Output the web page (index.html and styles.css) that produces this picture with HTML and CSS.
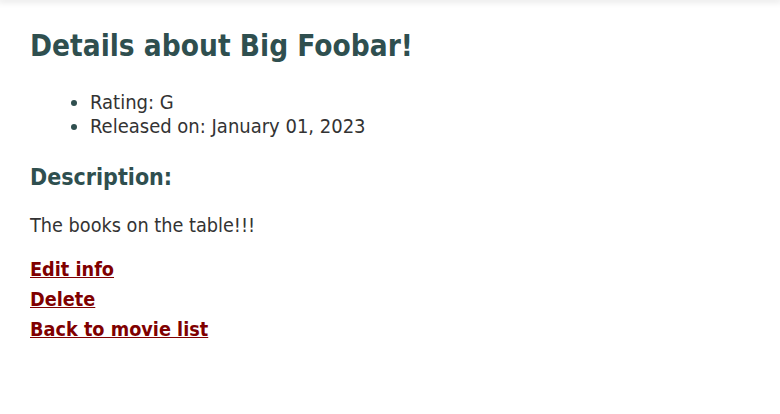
FILE: index.html
```html
<!DOCTYPE html>
<html>
<head>
<meta charset="utf-8">
<link rel="stylesheet" href="styles.css">
</head>
<body>
<div class="topbar"></div>
<main class="content">
  <h1 class="title">Details about Big Foobar!</h1>
  <ul class="facts">
    <li>Rating: G</li>
    <li>Released on: January 01, 2023</li>
  </ul>
  <h3 class="subtitle">Description:</h3>
  <p class="desc">The books on the table!!!</p>
  <nav class="links">
    <a href="#">Edit info</a>
    <a href="#">Delete</a>
    <a href="#">Back to movie list</a>
  </nav>
</main>
</body>
</html>
```
FILE: styles.css
```css
html, body {
  margin: 0;
  padding: 0;
  background: #fff;
}
body {
  font-family: "DejaVu Sans Condensed", "DejaVu Sans", sans-serif;
  color: #333;
  font-size: 20px;
}
.topbar {
  height: 0;
  box-shadow: 0 0 6px 2px rgba(0,0,0,0.12);
}
.content {
  padding: 28px 30px 0;
}
.title {
  font-size: 29.5px;
  line-height: 36px;
  margin: 0 0 26px;
  color: #2f4f4f;
}
.facts {
  margin: 0;
  padding-left: 60px;
  line-height: 24px;
}
.facts li::marker {
  color: #2f4f4f;
}
.subtitle {
  font-size: 23px;
  line-height: 28px;
  margin: 25px 0 23px;
  color: #2f4f4f;
}
.desc {
  margin: 0 0 17px;
  line-height: 24px;
  font-size: 19.7px;
}
.links {
  display: flex;
  flex-direction: column;
  align-items: flex-start;
}
.links a {
  color: #800000;
  font-weight: bold;
  font-size: 19.7px;
  line-height: 30px;
}
```
